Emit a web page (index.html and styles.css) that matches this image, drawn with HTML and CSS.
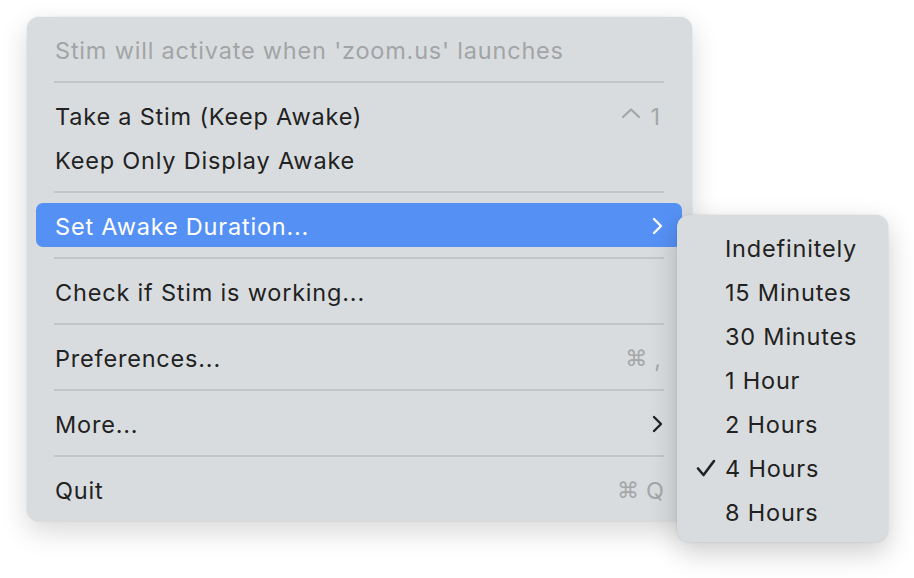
FILE: index.html
```html
<!DOCTYPE html>
<html>
<head>
<meta charset="utf-8">
<link rel="stylesheet" href="styles.css">
</head>
<body>
<div class="stage">
  <div class="menu main">
    <div class="item disabled">Stim will activate when 'zoom.us' launches</div>
    <div class="sep"></div>
    <div class="item"><span>Take a Stim (Keep Awake)</span><span class="key"><svg class="caret" width="20" height="12" viewBox="0 0 20 12"><path d="M2 10 L10 2.5 L18 10" fill="none" stroke="currentColor" stroke-width="2.2" stroke-linecap="round" stroke-linejoin="round"/></svg><span class="num">1</span></span></div>
    <div class="item"><span>Keep Only Display Awake</span></div>
    <div class="sep"></div>
    <div class="item active"><span>Set Awake Duration...</span>
      <svg class="chev" width="12" height="18" viewBox="0 0 12 18"><path d="M3 2 L10 9 L3 16" fill="none" stroke="currentColor" stroke-width="2.4" stroke-linecap="round" stroke-linejoin="round"/></svg>
    </div>
    <div class="sep"></div>
    <div class="item"><span>Check if Stim is working...</span></div>
    <div class="sep"></div>
    <div class="item"><span>Preferences...</span><span class="key"><span class="sym">⌘</span> ,</span></div>
    <div class="sep"></div>
    <div class="item"><span>More...</span>
      <svg class="chev" width="12" height="18" viewBox="0 0 12 18"><path d="M3 2 L10 9 L3 16" fill="none" stroke="currentColor" stroke-width="2.4" stroke-linecap="round" stroke-linejoin="round"/></svg>
    </div>
    <div class="sep"></div>
    <div class="item"><span>Quit</span><span class="key quit"><span class="sym">⌘</span> Q</span></div>
  </div>
  <div class="menu sub">
    <div class="sitem"><span class="mark"></span>Indefinitely</div>
    <div class="sitem"><span class="mark"></span>15 Minutes</div>
    <div class="sitem"><span class="mark"></span>30 Minutes</div>
    <div class="sitem"><span class="mark"></span>1 Hour</div>
    <div class="sitem"><span class="mark"></span>2 Hours</div>
    <div class="sitem"><span class="mark"><svg width="20" height="18" viewBox="0 0 20 18"><path d="M2 9.5 L7.5 16 L18 2" fill="none" stroke="currentColor" stroke-width="2.6" stroke-linecap="round" stroke-linejoin="round"/></svg></span>4 Hours</div>
    <div class="sitem"><span class="mark"></span>8 Hours</div>
  </div>
</div>
</body>
</html>
```

FILE: styles.css
```css
html, body {
  margin: 0;
  padding: 0;
  background: #ffffff;
}
body {
  font-family: "Inter", "Noto Sans", "DejaVu Sans", sans-serif;
  font-size: 23.5px;
  letter-spacing: 0.8px;
  color: #222222;
  -webkit-font-smoothing: antialiased;
}
.stage {
  position: relative;
  width: 914px;
  height: 578px;
  padding: 17px 0 0 27px;
  box-sizing: border-box;
}
.menu {
  background: #d9dcde;
  border-radius: 12px;
  box-shadow: 0 10px 28px rgba(0, 0, 0, 0.16), 0 0 2px rgba(0, 0, 0, 0.12);
  box-sizing: border-box;
}
.main {
  width: 665px;
  padding: 10px 10px 10px 9px;
}
.item {
  height: 44px;
  display: flex;
  align-items: center;
  justify-content: space-between;
  padding: 2px 21px 0 19px;
  box-sizing: border-box;
  border-radius: 7px;
  white-space: nowrap;
}
.item.disabled {
  color: #a2a4a6;
}
.item.active {
  background: #5591f5;
  color: #ffffff;
}
.key {
  color: #a4a6a8;
  display: flex;
  align-items: center;
  letter-spacing: 0;
}
.key.quit {
  margin-right: -3px;
}
.num {
  margin-right: 1px;
}
.caret {
  display: block;
  margin-right: 9px;
  margin-top: -7px;
}
.sym {
  font-family: "DejaVu Sans", sans-serif;
  font-size: 22px;
  margin-right: 7px;
}
.chev {
  display: block;
  margin-right: -2px;
  color: #222222;
}
.item.active .chev {
  color: #ffffff;
}
.sep {
  height: 22px;
  margin: 0 18px;
  display: flex;
  align-items: center;
}
.sep::before {
  content: "";
  display: block;
  width: 100%;
  height: 2px;
  background: #c3c5c7;
}
.sub {
  position: absolute;
  left: 677px;
  top: 215px;
  width: 211px;
  padding: 11px 0 8px 0;
  box-shadow: 0 10px 28px rgba(0, 0, 0, 0.2), 0 0 2px rgba(0, 0, 0, 0.15);
}
.sitem {
  height: 44px;
  display: flex;
  align-items: center;
  padding: 0 0 0 19px;
  box-sizing: border-box;
  white-space: nowrap;
}
.mark {
  width: 29px;
  display: flex;
  align-items: center;
  color: #222222;
}
.mark svg {
  display: block;
}
```
